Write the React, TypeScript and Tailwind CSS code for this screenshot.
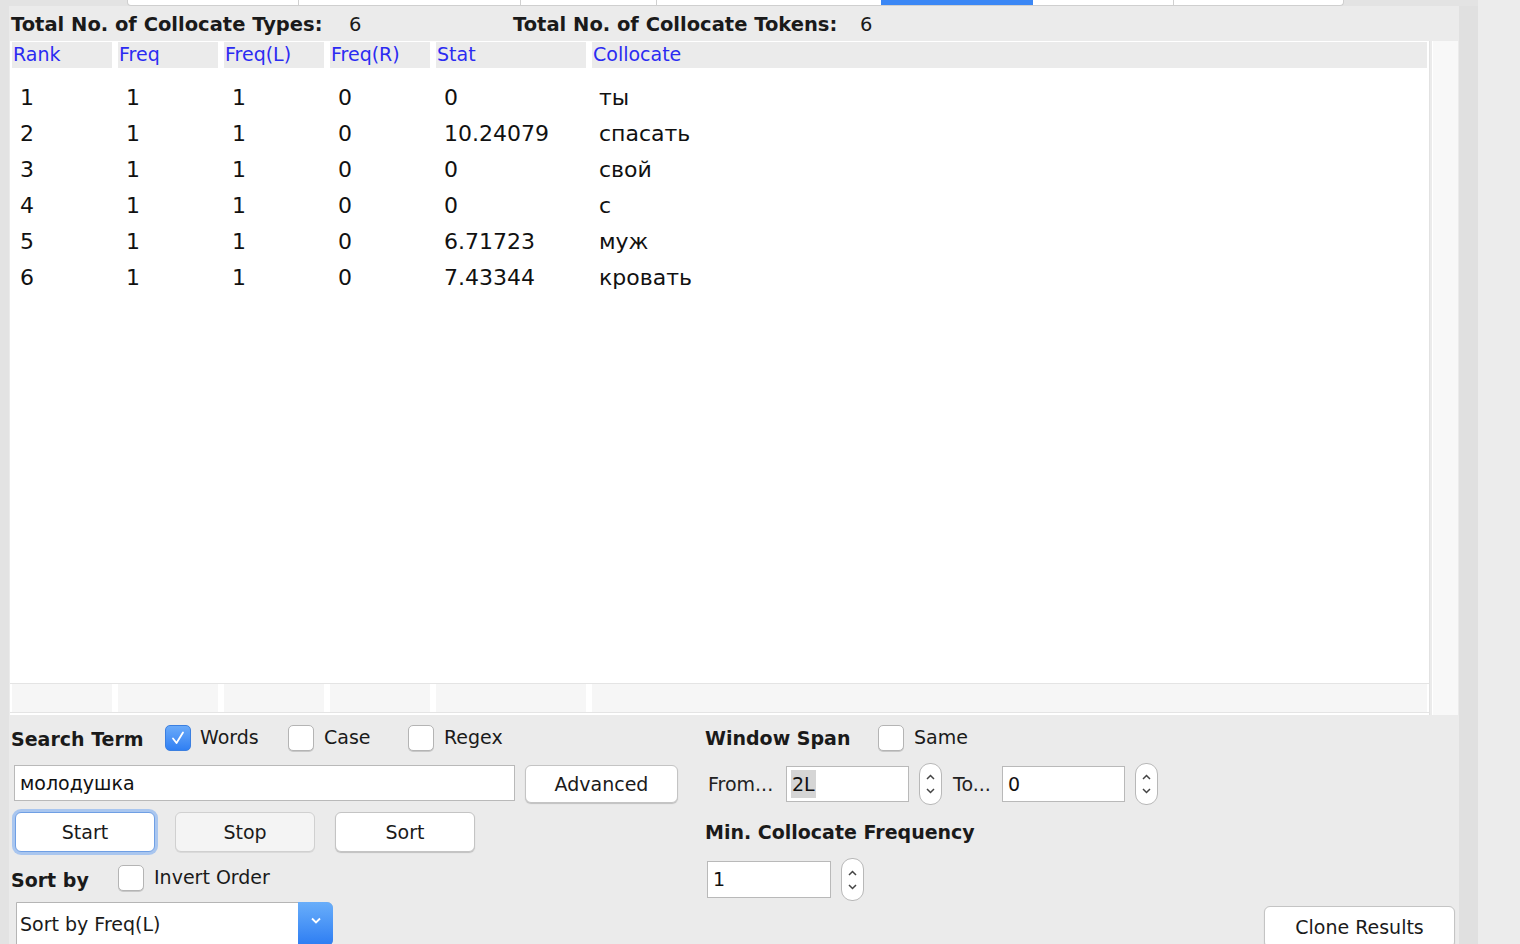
import React from 'react';

const ROWS = [
  ['1', '1', '1', '0', '0', 'ты'],
  ['2', '1', '1', '0', '10.24079', 'спасать'],
  ['3', '1', '1', '0', '0', 'свой'],
  ['4', '1', '1', '0', '0', 'с'],
  ['5', '1', '1', '0', '6.71723', 'муж'],
  ['6', '1', '1', '0', '7.43344', 'кровать'],
];

const HEADERS = ['Rank', 'Freq', 'Freq(L)', 'Freq(R)', 'Stat', 'Collocate'];
const COL_W = ['w-[100px]', 'w-[100px]', 'w-[100px]', 'w-[100px]', 'w-[150px]', 'flex-1'];

const Checkbox: React.FC<{ checked?: boolean }> = ({ checked }) =>
  checked ? (
    <div className="w-[26px] h-[26px] rounded-[5px] bg-gradient-to-b from-[#6aaaf9] to-[#2f7ff3] border border-[#3b7fe0] flex items-center justify-center shrink-0">
      <svg width="18" height="18" viewBox="0 0 18 18">
        <path d="M4 9.5 L7.5 14 L14 3.5" stroke="white" strokeWidth="1.8" fill="none" strokeLinecap="round" strokeLinejoin="round" />
      </svg>
    </div>
  ) : (
    <div className="w-[26px] h-[26px] rounded-[5px] bg-white border border-[#b4b4b4] shadow-[0_1px_0_#c8c8c8] shrink-0" />
  );

const Stepper: React.FC<{ h?: string }> = ({ h = 'h-[42px]' }) => (
  <div className={`w-[23px] ${h} rounded-[11px] bg-white border border-[#b8b8b8] flex flex-col items-center justify-center gap-[6px] shrink-0`}>
    <svg width="11" height="8" viewBox="0 0 11 8">
      <path d="M2 6 L5.5 2.5 L9 6" stroke="#444" strokeWidth="1.5" fill="none" />
    </svg>
    <svg width="11" height="8" viewBox="0 0 11 8">
      <path d="M2 2 L5.5 5.5 L9 2" stroke="#444" strokeWidth="1.5" fill="none" />
    </svg>
  </div>
);

const Button: React.FC<{ label: string; w: string; h?: string; variant?: 'focus' | 'dim' | 'plain' }> = ({
  label,
  w,
  h = 'h-[40px]',
  variant = 'plain',
}) => {
  const base = `${w} ${h} rounded-[6px] flex items-center justify-center text-[19px] text-[#1a1a1a] shrink-0`;
  if (variant === 'focus')
    return (
      <div className={`${base} bg-white border border-[#6f9fe4] shadow-[0_0_0_3px_#a9c6ef]`}>{label}</div>
    );
  if (variant === 'dim')
    return (
      <div className={`${base} bg-[#f4f4f4] border border-[#d0d0d0] shadow-[0_1px_0_#dadada]`}>{label}</div>
    );
  return (
    <div className={`${base} bg-white border border-[#c4c4c4] shadow-[0_1px_1px_#c0c0c0]`}>{label}</div>
  );
};

const TextInput: React.FC<{ w: string; h?: string; children?: React.ReactNode }> = ({ w, h = 'h-[36px]', children }) => (
  <div className={`${w} ${h} bg-white border border-[#b9b9b9] flex items-center pl-[5px] text-[19px] text-[#111] shrink-0`}>
    {children}
  </div>
);

export default function App() {
  return (
    <div className="w-[1520px] h-[944px] overflow-hidden flex bg-[#e3e3e3] font-['DejaVu_Sans',sans-serif] text-[#1a1a1a]">
      <div className="w-[1478px] flex flex-col">
        {/* tab strip */}
        <div className="h-[6px] flex shrink-0">
          <div className="w-[127px]" />
          <div className="flex h-[6px] bg-white border-b border-[#cfcfcf] rounded-bl-[4px] rounded-br-[4px] border-l border-r">
            <div className="w-[170px]" />
            <div className="w-[222px] border-l border-[#d0d0d0]" />
            <div className="w-[136px] border-l border-[#d0d0d0]" />
            <div className="w-[225px] border-l border-[#d0d0d0]" />
            <div className="w-[152px] bg-[#3b87f5]" />
            <div className="w-[140px]" />
            <div className="w-[170px] border-l border-[#d0d0d0]" />
          </div>
        </div>

        <div className="flex flex-1 min-h-0">
          <div className="w-[9px]" />
          {/* main panel */}
          <div className="w-[1450px] bg-[#ebebeb] flex flex-col overflow-hidden">
            {/* totals */}
            <div className="h-[35px] shrink-0 flex items-center pl-[2px] pt-[2px] text-[19.5px]">
              <span className="font-bold w-[338px]">Total No. of Collocate Types:</span>
              <span className="w-[164px]">6</span>
              <span className="font-bold w-[347px]">Total No. of Collocate Tokens:</span>
              <span>6</span>
            </div>

            {/* table + scrollbar */}
            <div className="h-[674px] shrink-0 flex pl-[1px] gap-[2px]">
              <div className="w-[1420px] bg-white flex flex-col border-r border-[#e2e2e2]">
                <div className="flex gap-[6px] px-[2px] pt-[1px]">
                  {HEADERS.map((h, i) => (
                    <div key={h} className={`${COL_W[i]} h-[26px] bg-[#ebebeb] flex items-center pl-[1px] pb-[1px] text-[19px] text-[#2b2bf2]`}>
                      {h}
                    </div>
                  ))}
                </div>
                <div className="flex-1 pt-[11px]">
                  {ROWS.map((r) => (
                    <div key={r[0]} className="flex gap-[6px] px-[2px] h-[36px] items-center text-[22px] text-[#111]">
                      {r.map((c, i) => (
                        <div key={i} className={`${COL_W[i]} ${i === 5 ? 'pl-[7px]' : 'pl-[8px]'}`}>
                          {c}
                        </div>
                      ))}
                    </div>
                  ))}
                </div>
                <div className="h-[30px] mb-[2px] flex gap-[6px] px-[2px] border-t border-b border-[#e4e4e4]">
                  {COL_W.map((w, i) => (
                    <div key={i} className={`${w} bg-[#f6f6f6]`} />
                  ))}
                </div>
              </div>
              <div className="w-[26px] bg-[#f8f8f8] border-l border-white" />
            </div>

            {/* controls */}
            <div className="flex-1 flex pt-[10px]">
              {/* left column */}
              <div className="w-[696px] pl-[2px] flex flex-col">
                <div className="h-[26px] shrink-0 flex items-center text-[19px]">
                  <span className="font-bold w-[154px] mt-[3px]">Search Term</span>
                  <Checkbox checked />
                  <span className="ml-[9px] w-[88px] -mt-[2px]">Words</span>
                  <Checkbox />
                  <span className="ml-[10px] w-[84px] -mt-[2px]">Case</span>
                  <Checkbox />
                  <span className="ml-[10px] -mt-[2px]">Regex</span>
                </div>
                <div className="mt-[14px] flex items-start shrink-0">
                  <div className="ml-[3px]" />
                  <TextInput w="w-[501px]">молодушка</TextInput>
                  <div className="ml-[10px]">
                    <Button label="Advanced" w="w-[153px]" h="h-[38px]" />
                  </div>
                </div>
                <div className="mt-[9px] flex gap-[20px] pl-[4px] shrink-0">
                  <Button label="Start" w="w-[140px]" variant="focus" />
                  <Button label="Stop" w="w-[140px]" variant="dim" />
                  <Button label="Sort" w="w-[140px]" />
                </div>
                <div className="mt-[13px] h-[26px] flex items-center text-[19px] shrink-0">
                  <span className="font-bold w-[107px] mt-[4px]">Sort by</span>
                  <Checkbox />
                  <span className="ml-[10px] -mt-[2px]">Invert Order</span>
                </div>
                <div className="mt-[11px] pl-[5px] shrink-0">
                  <div className="w-[317px] h-[44px] bg-white border border-[#b5b5b5] rounded-r-[6px] flex">
                    <div className="flex-1 flex items-center pl-[3px] text-[19px]">Sort by Freq(L)</div>
                    <div className="w-[35px] -my-[1px] -mr-[1px] rounded-r-[6px] bg-gradient-to-b from-[#69aefa] to-[#2c7cf2] flex items-start justify-center pt-[14px]">
                      <svg width="14" height="9" viewBox="0 0 14 9">
                        <path d="M3 2.5 L7 6.5 L11 2.5" stroke="white" strokeWidth="1.8" fill="none" />
                      </svg>
                    </div>
                  </div>
                </div>
              </div>

              {/* right column */}
              <div className="flex-1 flex flex-col pr-[4px]">
                <div className="h-[26px] shrink-0 flex items-center text-[19px]">
                  <span className="font-bold w-[173px] mt-[1px]">Window Span</span>
                  <Checkbox />
                  <span className="ml-[10px] -mt-[2px]">Same</span>
                </div>
                <div className="mt-[12px] h-[42px] shrink-0 flex items-center text-[19px]">
                  <span className="ml-[3px] w-[78px] text-[#222]">From...</span>
                  <TextInput w="w-[123px]">
                    <span className="bg-[#d5d5d5] px-[1px] -ml-[1px]">2L</span>
                  </TextInput>
                  <div className="ml-[10px]">
                    <Stepper />
                  </div>
                  <span className="ml-[11px] w-[49px] text-[#222]">To...</span>
                  <TextInput w="w-[123px]">0</TextInput>
                  <div className="ml-[10px]">
                    <Stepper />
                  </div>
                </div>
                <div className="mt-[16px] shrink-0 text-[19px] font-bold leading-[22px]">Min. Collocate Frequency</div>
                <div className="mt-[15px] shrink-0 flex items-center pl-[2px]">
                  <TextInput w="w-[124px]" h="h-[37px]">1</TextInput>
                  <div className="ml-[10px]">
                    <Stepper h="h-[43px]" />
                  </div>
                </div>
                <div className="mt-[5px] shrink-0 flex justify-end">
                  <Button label="Clone Results" w="w-[191px]" h="h-[42px]" />
                </div>
              </div>
            </div>
          </div>
          <div className="w-[19px] bg-[#e0e0e0]" />
        </div>
      </div>
      <div className="flex-1 bg-[#ececec]" />
    </div>
  );
}
